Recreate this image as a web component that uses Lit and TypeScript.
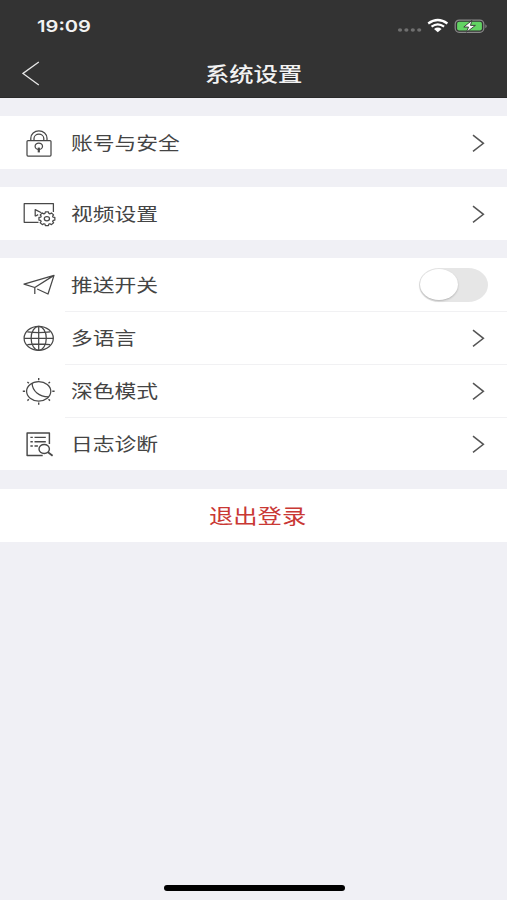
import { LitElement, html, svg, css } from "lit";
import { customElement, property } from "lit/decorators.js";

const gearPath = (cx: number, cy: number, rx: number, ry: number): string => {
  const pts: string[] = [];
  for (let i = 0; i < 8; i++) {
    for (const [off, k] of [[-0.3, 0.8], [-0.19, 1], [0.19, 1], [0.3, 0.8]]) {
      const a = (i * Math.PI) / 4 + off;
      pts.push(`${(cx + Math.cos(a) * rx * k).toFixed(2)} ${(cy + Math.sin(a) * ry * k).toFixed(2)}`);
    }
  }
  return `M${pts.join("L")}Z`;
};

const icons: Record<string, unknown> = {
  lock: svg`
    <rect x="9" y="18.6" width="24" height="15.4" rx="1"/>
    <path d="M12.8 18.6v-2.4a8.1 7.3 0 0 1 16.2 0v2.4M16 18.6v-2a4.9 4.4 0 0 1 9.8 0v2"/>
    <ellipse cx="20.8" cy="24.2" rx="3.7" ry="3.2"/>
    <path d="M20.8 25.6v4.8" stroke-width="2.2"/>`,
  video: svg`
    <path d="M20.5 29.3H6.2V10.7h29.2v8.4"/>
    <path d="M17.2 23.2v-6.6l6.2 3.2M17.2 23.2l3-1.6"/>
    <path d="${gearPath(28.9, 25.8, 8.1, 7)}"/>
    <ellipse cx="28.9" cy="25.8" rx="2.6" ry="2.1"/>`,
  plane: svg`
    <path d="M36 11.4L6 20.1l10.8 3.4L36 11.4L30 30l-10.8-5M16.8 23.5V30"/>`,
  globe: svg`
    <ellipse cx="20.7" cy="21.3" rx="14.6" ry="12"/>
    <ellipse cx="20.7" cy="21.3" rx="7.6" ry="12"/>
    <path d="M20.7 9.3v24M6.1 21.3h29.2M9.3 14.9q11.4 1.4 22.8 0M9.3 27.7q11.4-1.4 22.8 0"/>`,
  moon: svg`
    <ellipse cx="20.7" cy="21.3" rx="12.1" ry="9.7"/>
    <path d="M14.1 13.3c.3 7.8 7 13.6 16.6 13.5"/>
    <path d="M20.7 8v2.3M20.7 32.4v2.3M4.8 21.3h2.3M34.3 21.3h2.3M9.4 12l1.5 1.3M32 12l-1.5 1.3M9.4 30.6l1.5-1.3M32 30.6l-1.5-1.3" stroke-width="1.4"/>`,
  log: svg`
    <path d="M31.4 21V10H9.1v22.5h15.6" stroke-width="1.45"/>
    <path d="M12.4 14.4h2.4M16.5 14.4h11.3M12.4 18.7h2.4M16.5 18.7h11.3M12.4 23h2.4M16.5 23h3.4" stroke-width="1.4"/>
    <ellipse cx="26.2" cy="26" rx="5.2" ry="4.5" stroke-width="1.4"/>
    <path d="M30 29.2l4.6 3.6" stroke-width="1.8"/>`,
};

@customElement("settings-row")
export class SettingsRow extends LitElement {
  @property() icon = "";
  @property() label = "";
  @property({ type: Boolean }) toggle = false;
  @property({ type: Boolean }) divided = false;

  static styles = css`
    :host { display: block; }
    .row { display: flex; height: 53px; align-items: center; padding-left: 18px; }
    .icon { flex: none; width: 42px; height: 42px; fill: none; stroke: #484848; stroke-width: 1.25; stroke-linejoin: round; }
    .body { flex: 1; height: 53px; box-sizing: border-box; margin-left: 5px; padding: 0 22px 0 6px; display: flex; align-items: center; justify-content: space-between; }
    .divided { border-top: 1px solid #f1f1f3; }
    .label { padding-bottom: 2px; font-size: 18px; line-height: 26px; color: #444; white-space: nowrap; transform: scaleX(1.208); transform-origin: left center; }
    .chevron { width: 13px; height: 18px; fill: none; stroke: #555; stroke-width: 1.5; }
    .switch { width: 69px; height: 34px; margin-right: -3px; border-radius: 20px / 17px; background: #e6e6e6; box-sizing: border-box; padding: 1px; }
    .knob { width: 38px; height: 31px; border-radius: 50%; background: #fff; box-shadow: 0 1px 2px rgba(0, 0, 0, 0.22); }
  `;

  render() {
    return html`<div class="row">
      <svg class="icon" viewBox="0 0 42 42">${icons[this.icon]}</svg>
      <div class="body ${this.divided ? "divided" : ""}">
        <span class="label">${this.label}</span>
        ${this.toggle
          ? html`<div class="switch"><div class="knob"></div></div>`
          : html`<svg class="chevron" viewBox="0 0 13 18"><path d="M1 1.2L11.4 9.3L1 17.4"/></svg>`}
      </div>
    </div>`;
  }
}

@customElement("app-root")
export class AppRoot extends LitElement {
  static styles = css`
    :host { display: flex; flex-direction: column; height: 900px; background: #f0f0f5; font-family: "Noto Sans CJK SC", sans-serif; overflow: hidden; }
    .header { flex: none; height: 98px; box-sizing: border-box; background: #333; border-bottom: 1px solid #2a2a2a; color: #f2f2f2; }
    .status { display: flex; height: 49px; box-sizing: border-box; padding: 3px 19px 0 37px; justify-content: space-between; align-items: center; }
    .time { font: 600 16.5px/20px Inter, sans-serif; transform: scaleX(1.22); transform-origin: left center; }
    .indicators { width: 92px; height: 20px; }
    .nav { display: grid; grid-template-columns: 62px 1fr 62px; height: 48px; align-items: center; }
    .back { width: 18px; height: 25px; margin-left: 22px; fill: none; stroke: #e8e8e8; stroke-width: 1.3; }
    .title { text-align: center; font-size: 20.3px; font-weight: 500; line-height: 30px; }
    .wide { display: inline-block; transform: scaleX(1.2); }
    .group { flex: none; background: #fff; margin-top: 18px; }
    .logout { height: 53px; box-sizing: border-box; margin-top: 19px; display: flex; align-items: center; justify-content: center; color: #c93834; font-size: 20.3px; line-height: 30px; padding: 0 0 2px 8px; }
    .home { width: 181px; height: 6px; border-radius: 3px; background: #000; margin: auto 0 9px 164px; }
  `;

  render() {
    return html`
      <header class="header">
        <div class="status">
          <span class="time">19:09</span>
          <svg class="indicators" viewBox="0 0 92 20">
            <g fill="#707070">
              <ellipse cx="4" cy="14" rx="2.1" ry="1.8"/><ellipse cx="10.4" cy="14" rx="2.1" ry="1.8"/>
              <ellipse cx="16.8" cy="14" rx="2.1" ry="1.8"/><ellipse cx="23.2" cy="14" rx="2.1" ry="1.8"/>
            </g>
            <g fill="none" stroke="#fff" stroke-width="2.2">
              <path d="M32.2 7.5q9.6-7 19.2 0M35.5 10.6q6.3-4.6 12.6 0"/>
            </g>
            <path d="M38 12.9q3.8-2.6 7.6 0l-3.8 3.3z" fill="#fff"/>
            <rect x="59.2" y="4.1" width="28.6" height="12.2" rx="4" fill="none" stroke="#8a8a8a" stroke-width="1.2"/>
            <rect x="61.1" y="5.8" width="24.8" height="8.8" rx="2" fill="#62d363"/>
            <path d="M89.4 8.2q2.6 2 0 4z" fill="#8a8a8a"/>
            <path d="M75.9 4.4L67.8 11h4.7l-1.9 5.2l8.8-6.8h-4.9z" fill="#fff" stroke="#333" stroke-width=".9"/>
          </svg>
        </div>
        <div class="nav">
          <svg class="back" viewBox="0 0 18 25"><path d="M16.8 1L1 12.4L16.8 24"/></svg>
          <div class="title"><span class="wide">系统设置</span></div>
        </div>
      </header>
      <section class="group"><settings-row icon="lock" label="账号与安全"></settings-row></section>
      <section class="group"><settings-row icon="video" label="视频设置"></settings-row></section>
      <section class="group">
        <settings-row icon="plane" label="推送开关" toggle></settings-row>
        <settings-row icon="globe" label="多语言" divided></settings-row>
        <settings-row icon="moon" label="深色模式" divided></settings-row>
        <settings-row icon="log" label="日志诊断" divided></settings-row>
      </section>
      <section class="group logout"><span class="wide">退出登录</span></section>
      <div class="home"></div>
    `;
  }
}
